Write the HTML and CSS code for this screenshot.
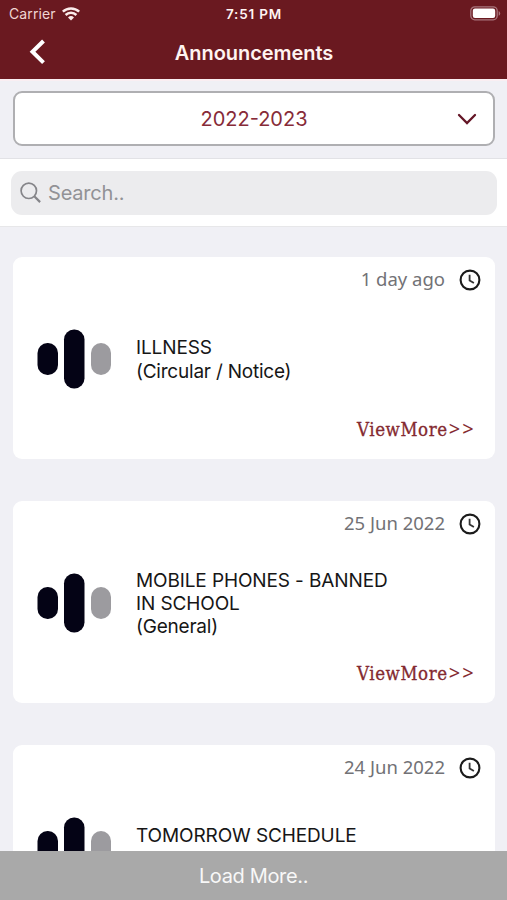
FILE: index.html
```html
<!DOCTYPE html>
<html lang="en">
<head>
<meta charset="utf-8">
<title>Announcements</title>
<link rel="stylesheet" href="styles.css">
</head>
<body>
<div class="app">
  <svg class="defs" width="0" height="0" aria-hidden="true">
    <symbol id="clock" viewBox="0 0 22 22">
      <circle cx="11" cy="11" r="9.4" fill="none" stroke="#1b1b1b" stroke-width="2.1"/>
      <path d="M10.6 5.8v5.6l4.3 2.7" fill="none" stroke="#333" stroke-width="1.8"/>
    </symbol>
    <symbol id="bars" viewBox="0 0 75 60">
      <rect x=".5" y="14" width="20.5" height="32" rx="10" fill="#040315"/>
      <rect x="27" y=".5" width="20.5" height="59" rx="10" fill="#040315"/>
      <rect x="54" y="14" width="20" height="32" rx="10" fill="#9c9b9f"/>
    </symbol>
  </svg>
  <header class="header">
    <div class="status">
      <div class="carrier"><span>Carrier</span>
        <svg width="18" height="14" viewBox="0 0 18 14" fill="none" stroke="#fbeceb" stroke-width="2.5"><path d="M.8 4.7a11.8 11.8 0 0 1 16.4 0M3.6 8a7.7 7.7 0 0 1 10.8 0"/><path d="M6 10.5a4.4 4.4 0 0 1 6 0L9 13.6z" fill="#fbeceb" stroke="none"/></svg>
      </div>
      <span class="time">7:51 PM</span>
      <svg class="battery" width="31" height="15" viewBox="0 0 31 15"><rect x=".8" y=".8" width="26.4" height="13" rx="4" fill="none" stroke="#a8757c" stroke-width="1.3"/><rect x="2.8" y="2.6" width="22.4" height="9.4" rx="2.2" fill="#fff"/><path d="M28.7 5v4.8q1.5-.7 1.5-2.4t-1.5-2.4z" fill="#a8757c"/></svg>
    </div>
    <div class="titlebar">
      <svg class="back" width="18" height="28" viewBox="0 0 18 28"><path d="M15.5 3 4.5 13.8 15.5 24.6" fill="none" stroke="#fff" stroke-width="4"/></svg>
      <h1 class="title">Announcements</h1>
    </div>
  </header>
  <div class="year-area">
    <div class="select"><span class="year">2022-2023</span>
      <svg class="chevron" width="20" height="14" viewBox="0 0 20 14"><path d="m2 3 8 8 8-8" fill="none" stroke="#641626" stroke-width="2.3" stroke-linecap="round"/></svg>
    </div>
  </div>
  <div class="search-area">
    <div class="search">
      <svg width="22" height="22" viewBox="0 0 22 22" fill="none" stroke="#858589"><circle cx="8.8" cy="8.8" r="7.7" stroke-width="1.7"/><path d="m14.3 14.3 5.8 5.8" stroke-width="2.2"/></svg>
      <span class="placeholder">Search..</span>
    </div>
  </div>
  <main class="list">
    <article class="card">
      <div class="date"><span class="date-text">1 day ago</span><svg class="clock"><use href="#clock"/></svg></div>
      <div class="content"><svg class="bars"><use href="#bars"/></svg>
        <div class="text"><div>ILLNESS</div><div class="kind">(Circular / Notice)</div></div></div>
      <div class="more">ViewMore<span class="arrows">&gt;&gt;</span></div>
    </article>
    <article class="card">
      <div class="date"><span class="date-text">25 Jun 2022</span><svg class="clock"><use href="#clock"/></svg></div>
      <div class="content"><svg class="bars"><use href="#bars"/></svg>
        <div class="text"><div>MOBILE PHONES - BANNED</div><div>IN SCHOOL</div><div class="kind">(General)</div></div></div>
      <div class="more">ViewMore<span class="arrows">&gt;&gt;</span></div>
    </article>
    <article class="card">
      <div class="date"><span class="date-text">24 Jun 2022</span><svg class="clock"><use href="#clock"/></svg></div>
      <div class="content"><svg class="bars"><use href="#bars"/></svg>
        <div class="text"><div>TOMORROW SCHEDULE</div><div class="kind">(Circular / Notice)</div></div></div>
    </article>
  </main>
  <footer class="load">Load More..</footer>
</div>
</body>
</html>
```
FILE: styles.css
```css
* { box-sizing: border-box; }
body { margin: 0; font-family: Inter, "Liberation Sans", sans-serif; }
.app { display: flex; flex-direction: column; height: 900px; overflow: hidden; background: #f0f0f5; }
.app > * { flex-shrink: 0; }
.app svg { display: block; flex-shrink: 0; }
.app .defs { position: absolute; }
.header { height: 79px; background: #6a1920; color: #fff4f1; }
.status { display: grid; grid-template-columns: 1fr auto 1fr; align-items: center; height: 27px; padding: 0 6px 0 9px; font-size: 14px; }
.carrier { display: flex; align-items: center; gap: 6px; color: #f0d5d3; letter-spacing: .1px; }
.time { font-size: 13.5px; font-weight: 600; letter-spacing: .8px; margin-right: 2px; }
.battery { justify-self: end; }
.titlebar { display: grid; grid-template-columns: 48px 1fr 48px; align-items: center; height: 50px; }
.back { margin-left: 28px; }
.title { margin: 0; padding: 1px 0 0 1px; text-align: center; font-size: 20px; font-weight: 600; line-height: 24px; letter-spacing: -.05px; }
.year-area { height: 80px; padding: 11px 12px 0 13px; border-top: 2px solid #faeef2; border-bottom: 1px solid #e2e2e6; }
.select { display: grid; grid-template-columns: 40px 1fr 40px; align-items: center; height: 55px; margin-top: -1px; background: #fff; border: 2px solid #afafb2; border-radius: 9px; }
.year { grid-column: 2; text-align: center; color: #872b38; font-size: 20px; }
.chevron { margin-left: 4px; }
.search-area { height: 68px; padding: 12px 10px 0 11px; background: #fff; border-bottom: 1px solid #e7e7e9; }
.search { display: flex; align-items: center; gap: 6px; height: 44px; padding-left: 9px; background: #ececee; border-radius: 11px; }
.placeholder { color: #929296; font-size: 20px; letter-spacing: -.2px; }
.list { flex: 1 1 0; min-height: 0; overflow: hidden; display: flex; flex-direction: column; gap: 42px; padding: 30px 12px 0 12.5px; }
.card { display: flex; flex-direction: column; flex-shrink: 0; height: 202px; background: #fff; border-radius: 9px; }
.date { display: flex; justify-content: flex-end; align-items: center; gap: 14px; height: 45px; padding-right: 14px; color: #727276; }
.date-text { font: 18.5px/24px "Noto Sans", sans-serif; padding-bottom: 1px; }
.clock { width: 22px; height: 22px; }
.content { display: flex; align-items: center; gap: 24px; height: 114px; padding-left: 24.5px; }
.bars { width: 75px; height: 60px; }
.text { padding-top: 1px; color: #161616; font-size: 19px; line-height: 23.3px; letter-spacing: -.12px; white-space: nowrap; }
.kind { letter-spacing: -.22px; }
.more { padding-right: 20px; text-align: right; color: #842a30; font: 18.5px/27px "DejaVu Serif Condensed", "DejaVu Serif", serif; letter-spacing: .6px; -webkit-text-stroke: .3px #842a30; }
.arrows { font-family: "Noto Sans", sans-serif; font-size: 20px; letter-spacing: 2.2px; margin: 0 -1px 0 1px; -webkit-text-stroke: 0; line-height: 1; }
.load { height: 49px; background: #a9a9a9; color: #f8f8f8; text-align: center; font-size: 20px; line-height: 51px; letter-spacing: -.35px; }
```
